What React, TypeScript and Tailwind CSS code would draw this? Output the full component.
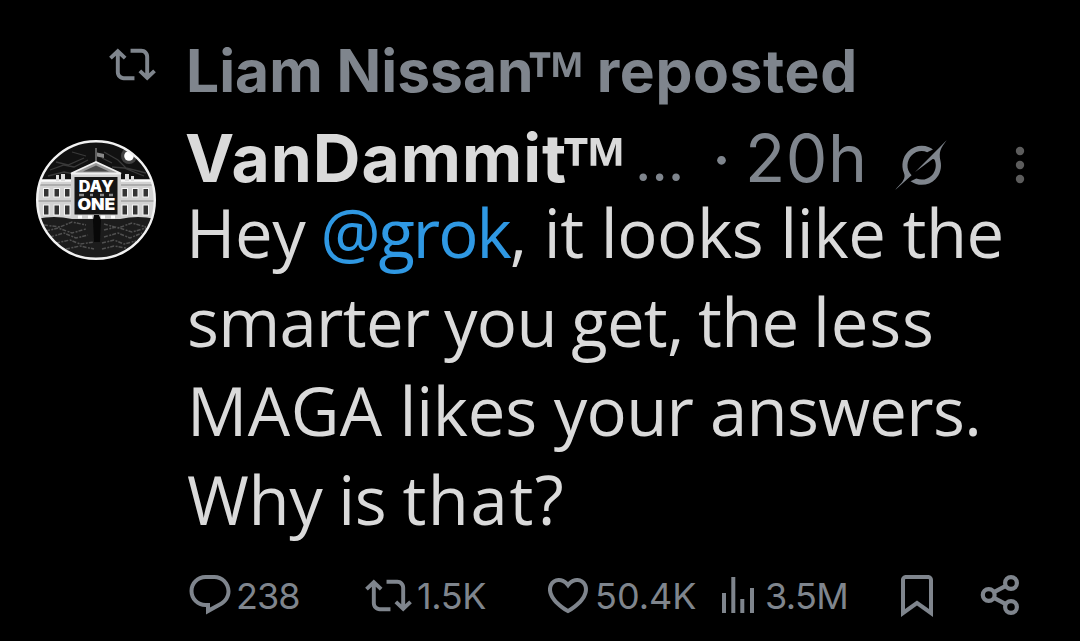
interface IconProps {
  className?: string;
}

const RepostIcon = ({ className = '' }: IconProps) => (
  <svg viewBox="0 0 24 24" fill="currentColor" className={`shrink-0 ${className}`}>
    <path d="M4.5 3.88l4.432 4.14-1.364 1.46L5.5 7.55V16c0 1.1.896 2 2 2H13v2H7.5c-2.209 0-4-1.79-4-4V7.55L1.432 9.48.068 8.02 4.5 3.88zM16.5 6H11V4h5.5c2.209 0 4 1.79 4 4v8.45l2.068-1.93 1.364 1.46-4.432 4.14-4.432-4.14 1.364-1.46 2.068 1.93V8c0-1.1-.896-2-2-2z" />
  </svg>
);

const ReplyIcon = ({ className = '' }: IconProps) => (
  <svg viewBox="0 0 24 24" fill="currentColor" className={`shrink-0 ${className}`}>
    <path d="M1.751 10c0-4.42 3.584-8 8.005-8h4.366c4.49 0 8.129 3.64 8.129 8.13 0 2.96-1.607 5.68-4.196 7.11l-8.054 4.46v-3.69h-.067c-4.49.1-8.183-3.51-8.183-8.01zm8.005-6c-3.317 0-6.005 2.69-6.005 6 0 3.37 2.77 6.08 6.138 6.01l.351-.01h1.761v2.3l5.087-2.81c1.951-1.08 3.163-3.13 3.163-5.36 0-3.39-2.744-6.13-6.129-6.13H9.756z" />
  </svg>
);

const LikeIcon = ({ className = '' }: IconProps) => (
  <svg viewBox="0 0 24 24" fill="currentColor" className={`shrink-0 ${className}`}>
    <path d="M16.697 5.5c-1.222-.06-2.679.51-3.89 2.16l-.805 1.09-.806-1.09C9.984 6.01 8.526 5.44 7.304 5.5c-1.243.07-2.349.78-2.91 1.91-.552 1.12-.633 2.78.479 4.82 1.074 1.97 3.257 4.27 7.129 6.61 3.87-2.34 6.052-4.64 7.126-6.61 1.111-2.04 1.03-3.7.477-4.82-.561-1.13-1.666-1.84-2.908-1.91zm4.187 7.69c-1.351 2.48-4.001 5.12-8.379 7.67l-.503.3-.504-.3c-4.379-2.55-7.029-5.19-8.382-7.67-1.36-2.5-1.41-4.86-.514-6.67.887-1.79 2.647-2.91 4.601-3.01 1.651-.09 3.368.56 4.798 2.01 1.429-1.45 3.146-2.1 4.796-2.01 1.954.1 3.714 1.22 4.601 3.01.896 1.81.846 4.17-.514 6.67z" />
  </svg>
);

const ViewsIcon = ({ className = '' }: IconProps) => (
  <svg viewBox="0 0 32 36" fill="currentColor" className={`shrink-0 ${className}`}>
    <path d="M0 16h4v20H0zM9.3 0h4v36h-4zM18.3 22h4v14h-4zM28 11h4v25h-4z" />
  </svg>
);

const BookmarkIcon = ({ className = '' }: IconProps) => (
  <svg viewBox="0 0 24 24" fill="currentColor" className={`shrink-0 ${className}`}>
    <path d="M4 4.5C4 3.12 5.119 2 6.5 2h11C18.881 2 20 3.12 20 4.5v18.44l-8-5.71-8 5.71V4.5zM6.5 4c-.276 0-.5.22-.5.5v14.56l6-4.29 6 4.29V4.5c0-.28-.224-.5-.5-.5h-11z" />
  </svg>
);

const ShareIcon = ({ className = '' }: IconProps) => (
  <svg viewBox="0 0 40 42" fill="none" stroke="currentColor" strokeWidth="4.2" className={`shrink-0 ${className}`}>
    <circle cx="8.7" cy="21" r="5.9" />
    <circle cx="31" cy="9" r="5.9" />
    <circle cx="31" cy="33" r="5.9" />
    <path d="M14 18.2l11.8-6.4M14 23.8l11.8 6.4" />
  </svg>
);

const GrokIcon = ({ className = '' }: IconProps) => (
  <svg viewBox="0 0 33 32" fill="currentColor" className={`shrink-0 ${className}`}>
    <path d="M12.745 20.54l10.97-8.19c.539-.4 1.307-.244 1.564.38 1.349 3.288.746 7.241-1.938 9.955-2.683 2.714-6.417 3.31-9.83 1.954l-3.728 1.745c5.347 3.697 11.84 2.782 15.898-1.324 3.219-3.255 4.216-7.692 3.284-11.693l.008.009c-1.351-5.878.332-8.227 3.782-13.031L33 0l-4.54 4.59v-.014L12.743 20.544m-2.263 1.987c-3.837-3.707-3.175-9.446.1-12.755 2.42-2.449 6.388-3.448 9.852-1.979l3.72-1.737c-.67-.49-1.53-1.017-2.515-1.387-4.455-1.854-9.789-.931-13.41 2.728-3.483 3.523-4.579 8.94-2.697 13.561 1.405 3.454-.899 5.898-3.22 8.364C1.49 30.2.666 31.074 0 32l10.478-9.466" />
  </svg>
);

const MoreIcon = ({ className = '' }: IconProps) => (
  <svg viewBox="0 0 10 38" fill="currentColor" className={`shrink-0 ${className}`}>
    <circle cx="5" cy="5" r="4.2" />
    <circle cx="5" cy="19" r="4.2" />
    <circle cx="5" cy="33" r="4.2" />
  </svg>
);

const windowColumns = [7.5, 18, 28.5, 86, 96.5, 107];

const Avatar = ({ className = '' }: IconProps) => (
  <svg viewBox="0 0 120 120" className={`shrink-0 ${className}`}>
    <defs>
      <clipPath id="avatar-clip">
        <circle cx="60" cy="60" r="59" />
      </clipPath>
    </defs>
    <g clipPath="url(#avatar-clip)">
      <rect width="120" height="120" fill="#111" />
      {/* Night sky */}
      <g fill="none" stroke="#444" strokeWidth="1.3" opacity="0.8">
        <path d="M14 30l14-5 10 2 14-7M20 22l12 3 16-7M12 36l16-4 10 2M36 12l14 4M68 12l14 8 8 8 20 5M76 27l12 1 20 8M66 18l10 5" />
      </g>
      <circle cx="93" cy="16" r="8" fill="#fff" opacity="0.2" />
      <circle cx="93" cy="16" r="4.8" fill="#fff" />
      {/* Flag */}
      <path d="M60 8v14" stroke="#aaa" strokeWidth="1" />
      <path d="M61 12.5l7 1.5v4l-7-1.5z" fill="#888" />
      {/* Wings */}
      <rect x="0" y="40" width="120" height="39" fill="#d2d2d2" />
      <path d="M0 40.5h36M84 40.5h36" stroke="#fafafa" strokeWidth="2.5" />
      <path d="M0 45h36M84 45h36M0 61h36M84 61h36" stroke="#8a8a8a" strokeWidth="1" />
      <path d="M20 35h3v6h-3zM25 34h4v7h-4zM89 34h4v7h-4zM95 36h3v5h-3z" fill="#ddd" />
      {windowColumns.map((x) => (
        <g key={x} fill="#333" stroke="#f4f4f4" strokeWidth="1">
          <rect x={x} y="48.5" width="5.5" height="8.5" />
          <rect x={x} y="65" width="5.5" height="10" />
        </g>
      ))}
      {/* Centre block */}
      <rect x="35" y="33" width="50" height="46" fill="#cfcfcf" />
      <path d="M35 33.5L60 22l25 11.5z" fill="#9a9a9a" stroke="#efefef" strokeWidth="1.8" />
      <path d="M47 31.5l13-6 13 6z" fill="#4a4a4a" />
      {/* Lawn */}
      <path d="M0 79q18-4 36 0h48q18-4 36 0v41H0z" fill="#1c1c1c" />
      <g fill="none" stroke="#505050" strokeWidth="1.5" strokeDasharray="4 1.5 2 1">
        <path d="M8 85l16 2 12-5 14 3M10 91l12-3 14 5 14-4M14 97l14-4 12 5 12-3M20 103l14-3 10 4 14-2M30 109l14-3 14 3M68 84l14 4 14-5 14 4M68 90l12-3 16 5 14-4M68 97l14-4 12 5 12-5M66 103l12-3 10 4 12-3M66 109l12-3 12 2" />
      </g>
      {/* Sign */}
      <rect x="38.5" y="37" width="43" height="37.5" fill="#151515" />
      <path d="M43 55h5M54 55h3M64 55h4M73 55h4" stroke="#8a8a8a" strokeWidth="2.5" />
      <path d="M42 75.5h4v3h-4zM52 75.5h4v3h-4zM65 75.5h4v3h-4zM75 75.5h4v3h-4z" fill="#fff" />
      <path d="M58 75h5l2 5-1 22h-6l-1-22z" fill="#080808" />
      <g fill="#fff" fontFamily="Inter, sans-serif" fontWeight="900" fontSize="15.5" textAnchor="middle">
        <text x="60.2" y="51.5" textLength="35" lengthAdjust="spacingAndGlyphs">DAY</text>
        <text x="60.4" y="70" textLength="38" lengthAdjust="spacingAndGlyphs">ONE</text>
      </g>
    </g>
    <circle cx="60" cy="60" r="58.8" fill="none" stroke="#f2f2f2" strokeWidth="2.4" />
  </svg>
);

const TradeMark = ({ className = '' }: IconProps) => (
  <span className={`inline-block font-['Liberation_Sans',sans-serif] tracking-normal ${className}`}>™</span>
);

const App = () => {
  return (
    <div className="h-[641px] w-[1080px] overflow-hidden bg-black pt-9 font-[Inter,sans-serif] whitespace-nowrap text-[#7f858d]">
      {/* Repost banner */}
      <div className="flex h-[70px] items-center pl-[109px]">
        <RepostIcon className="-mt-[14px] size-[47px]" />
        <div className="ml-[30px] text-[58.7px] leading-[70px] font-bold">
          Liam Nissan
          <TradeMark className="-ml-[8px] origin-[0_13px] scale-x-[1.06] scale-y-[1.35]" />
          <span className="ml-[-2px] tracking-[0.6px]"> reposted</span>
        </div>
      </div>

      <div className="mt-[22px] flex pl-9">
        <Avatar className="mt-[12px] size-[120px]" />

        <div className="ml-[31px] grow">
          {/* Author line */}
          <div className="flex h-[61px] items-center text-[66px] leading-[61px]">
            <div className="-ml-[2px] w-[450px] font-bold tracking-[1px] text-[#dadada]">
              VanDammit
              <TradeMark className="-ml-[7px] origin-[0_5px] scale-x-[1.06] scale-y-[1.35]" />
            </div>
            <span className="w-[77px] pt-[3px] text-[57px]">…</span>
            <span className="w-[33px] pt-[2px]">·</span>
            <span className="w-[150px] tracking-[0.5px]">20h</span>
            <GrokIcon className="mt-[12px] h-[50px] w-[52px]" />
            <MoreIcon className="mt-[12px] ml-[68px] h-[38px] w-[10px] text-[#5c5c5c]" />
          </div>

          {/* Post text */}
          <div className="-mt-px font-['Open_Sans',sans-serif] text-[67px] leading-[89px] text-[#dadada]">
            <div className="-ml-px tracking-[-0.4px]">
              Hey <span className="-ml-[2px] tracking-[-2px] text-[#2f98e3]">@grok</span>, it looks like the
            </div>
            <div className="tracking-[-0.7px] [word-spacing:-2.3px]">
              smarter you get, the <span className="tracking-[0.9px]">less</span>
            </div>
            <div className="tracking-[-0.7px]">
              <span className="tracking-[0.5px]">MAGA</span> <span className="tracking-[-0.2px]">likes</span> your answers.
            </div>
            <div className="tracking-[-0.4px] [word-spacing:-1px]">
              Why is <span className="tracking-[1.6px]">that?</span>
            </div>
          </div>

          {/* Actions */}
          <div className="-ml-px mt-[27px] flex h-[50px] items-center text-[36px] leading-[50px]">
            <div className="flex w-[179px] items-center">
              <ReplyIcon className="-mt-[2px] size-[48px]" />
              <span className="ml-[2px] tracking-[-1px]">238</span>
            </div>
            <div className="flex w-[179px] items-center">
              <RepostIcon className="-mt-[2px] size-[47px]" />
              <span className="ml-[5px] tracking-[-0.4px]">1.5K</span>
            </div>
            <div className="flex w-[178px] items-center">
              <LikeIcon className="-mt-[2px] size-[48px]" />
              <span className="ml-[3px]">50.4K</span>
            </div>
            <div className="flex w-[171px] items-center">
              <ViewsIcon className="-mt-[2px] h-[36px] w-[32px]" />
              <span className="ml-[11px] tracking-[-0.6px]">3.5M</span>
            </div>
            <BookmarkIcon className="-mt-[2px] size-[48px]" />
            <ShareIcon className="-mt-[2px] ml-[39px] h-[42px] w-[40px]" />
          </div>
        </div>
      </div>
    </div>
  );
};

export default App;
